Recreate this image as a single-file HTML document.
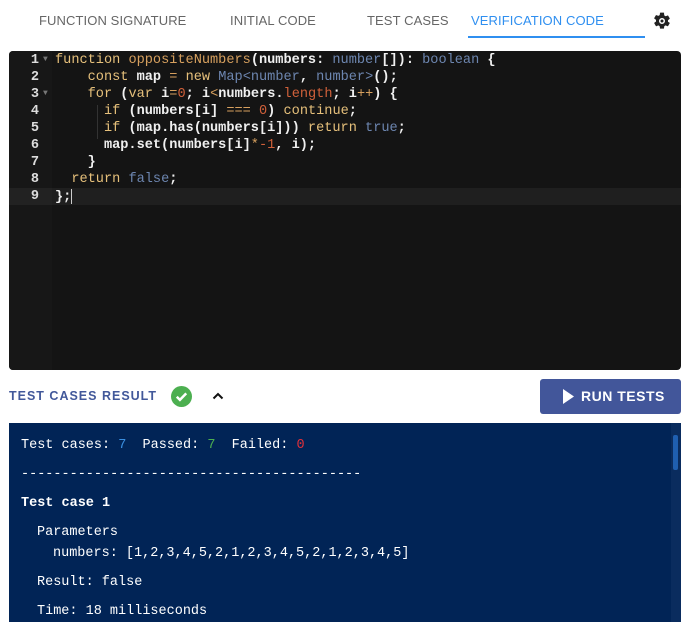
<!DOCTYPE html>
<html><head><meta charset="utf-8"><style>
body{margin:0;width:691px;height:636px;background:#fff;font-family:"Liberation Sans",sans-serif;position:relative;overflow:hidden}
.tab{position:absolute;top:13px;font-size:13px;color:#666;letter-spacing:0.1px}
.code{position:absolute;left:9px;top:51px;width:672px;height:319px;background:#141414;border-radius:4px;overflow:hidden;font-family:"Liberation Mono",monospace;font-size:13.6px}
.gut{position:absolute;left:0;top:0;width:43px;height:100%;background:#171717}
.ln{position:absolute;left:0;width:30px;text-align:right;color:#ddd;font-weight:bold}
.cl{position:absolute;left:46px;white-space:pre;color:#f0f0f0;font-weight:bold}
.k{color:#e6c07b;font-weight:normal}.f{color:#d7a05e;font-weight:normal}.t{color:#6d86b0;font-weight:normal}.n{color:#d0603a;font-weight:normal}
.con{position:absolute;left:9px;top:423px;width:672px;height:199px;background:#012456;font-family:"Liberation Mono",monospace;font-size:13.5px;color:#fff}
.con div{position:absolute;white-space:pre}
</style></head><body>
<div class="tab" style="left:39px">FUNCTION SIGNATURE</div>
<div class="tab" style="left:230px">INITIAL CODE</div>
<div class="tab" style="left:367px">TEST CASES</div>
<div class="tab" style="left:471px;color:#2f8ff0">VERIFICATION CODE</div>
<div style="position:absolute;left:468px;top:36px;width:177px;height:2px;background:#2f8ff0"></div>
<svg style="position:absolute;left:652px;top:11px" width="20" height="20" viewBox="0 0 24 24"><path fill="#222" d="M19.14 12.94c.04-.3.06-.61.06-.94s-.02-.64-.07-.94l2.030-1.58a.49.49 0 0 0 .12-.61l-1.92-3.32a.49.49 0 0 0-.59-.22l-2.39.96a7 7 0 0 0-1.62-.94l-.36-2.54A.48.48 0 0 0 13.92 2h-3.84a.48.48 0 0 0-.48.41l-.36 2.54c-.59.24-1.130.57-1.62.94l-2.39-.96a.48.48 0 0 0-.59.22L2.72 8.47a.47.47 0 0 0 .12.61l2.03 1.58c-.05.3-.09.630-.09.94s.02.64.07.94l-2.03 1.58a.49.49 0 0 0-.12.61l1.92 3.32c.12.22.37.29.59.22l2.39-.96c.5.38 1.03.7 1.62.94l.36 2.54c.05.24.24.41.48.41h3.84c.24 0 .44-.17.47-.41l.36-2.54c.59-.24 1.13-.56 1.62-.94l2.39.96c.22.08.47 0 .59-.22l1.92-3.32a.46.46 0 0 0-.12-.61zM12 15.6A3.6 3.6 0 1 1 12 8.4a3.6 3.6 0 0 1 0 7.2zm0-5.4a1.8 1.8 0 1 0 0 3.6 1.8 1.8 0 0 0 0-3.6z"/></svg>
<div class="code">
<div class="gut"></div>
<div style="position:absolute;left:0;top:137px;width:100%;height:17px;background:#1f1f1f"></div>
<div style="position:absolute;left:0;top:137px;width:43px;height:17px;background:#222"></div>
<div class="ln" style="top:2px">1</div><div class="ln" style="top:19px">2</div><div class="ln" style="top:36px">3</div><div class="ln" style="top:53px">4</div><div class="ln" style="top:70px">5</div><div class="ln" style="top:87px">6</div><div class="ln" style="top:104px">7</div><div class="ln" style="top:121px">8</div><div class="ln" style="top:138px">9</div>
<div style="position:absolute;left:34px;top:4px;color:#777;font-size:8px">▼</div>
<div style="position:absolute;left:34px;top:38px;color:#777;font-size:8px">▼</div>
<div style="position:absolute;left:88px;top:54px;width:1px;height:34px;background:#333"></div>
<div class="cl" style="top:2px"><span class="k">function</span> <span class="f">oppositeNumbers</span>(numbers: <span class="t">number</span>[]): <span class="t">boolean</span> {</div>
<div class="cl" style="top:19px">    <span class="k">const</span> map <span class="f">=</span> <span class="k">new</span> <span class="t">Map&lt;number</span>, <span class="t">number&gt;</span>();</div>
<div class="cl" style="top:36px">    <span class="k">for</span> (<span class="k">var</span> i<span class="f">=</span><span class="n">0</span>; i<span class="f">&lt;</span>numbers.<span class="n">length</span>; i<span class="f">++</span>) {</div>
<div class="cl" style="top:53px">      <span class="k">if</span> (numbers[i] <span class="f">===</span> <span class="n">0</span>) <span class="k">continue</span>;</div>
<div class="cl" style="top:70px">      <span class="k">if</span> (map.has(numbers[i])) <span class="k">return</span> <span class="t">true</span>;</div>
<div class="cl" style="top:87px">      map.set(numbers[i]<span class="f">*</span><span class="n">-1</span>, i);</div>
<div class="cl" style="top:104px">    }</div>
<div class="cl" style="top:121px">  <span class="k">return</span> <span class="t">false</span>;</div>
<div class="cl" style="top:138px">};<span style="display:inline-block;width:1px;height:15px;background:#ccc;vertical-align:middle"></span></div>
</div>
<div style="position:absolute;left:9px;top:389px;font-size:12.5px;font-weight:bold;color:#42589a;letter-spacing:1px">TEST CASES RESULT</div>
<svg style="position:absolute;left:171px;top:386px" width="21" height="21" viewBox="0 0 20 20"><circle cx="10" cy="10" r="10" fill="#4caf50"/><path d="M5.5 10.2l3 3 6-6.2" stroke="#fff" stroke-width="2.4" fill="none"/></svg>
<svg style="position:absolute;left:211px;top:390px" width="14" height="12" viewBox="0 0 14 12"><path d="M2.5 8.5L7 4l4.5 4.5" stroke="#111" stroke-width="2" fill="none"/></svg>
<div style="position:absolute;left:540px;top:379px;width:141px;height:35px;background:#42569a;border-radius:3px;color:#fff;font-weight:bold;font-size:14px;letter-spacing:0.5px">
<svg style="position:absolute;left:23px;top:10px" width="11" height="15" viewBox="0 0 11 15"><path d="M0 0L11 7.5L0 15z" fill="#fff"/></svg>
<span style="position:absolute;left:41px;top:9px">RUN TESTS</span></div>
<div class="con">
<div style="top:15px;left:12px">Test cases: <span style="color:#3a8fe0">7</span>  Passed: <span style="color:#4caf50">7</span>  Failed: <span style="color:#e0303a">0</span></div>
<div style="top:44px;left:12px">------------------------------------------</div>
<div style="top:73px;left:12px;font-weight:bold">Test case 1</div>
<div style="top:102px;left:28px">Parameters</div>
<div style="top:123px;left:44px">numbers: [1,2,3,4,5,2,1,2,3,4,5,2,1,2,3,4,5]</div>
<div style="top:152px;left:28px">Result: false</div>
<div style="top:181px;left:28px">Time: 18 milliseconds</div>
<div style="left:662px;top:0;width:10px;height:199px;background:#0a2c5e"></div>
<div style="left:664px;top:12px;width:5px;height:35px;background:#1f5fb0;border-radius:2px"></div>
</div>
</body></html>
